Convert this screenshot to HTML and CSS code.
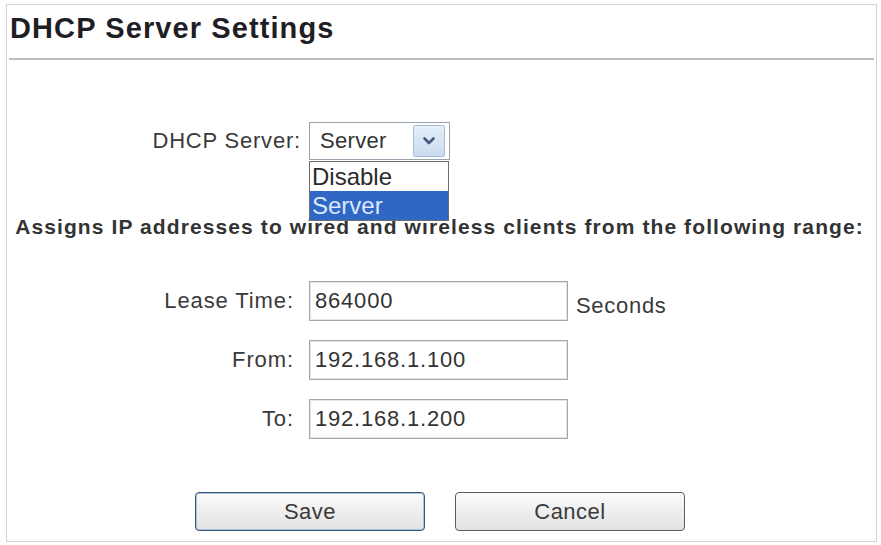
FILE: index.html
```html
<!DOCTYPE html>
<html>
<head>
<meta charset="utf-8">
<title>DHCP Server Settings</title>
<link rel="stylesheet" href="styles.css">
</head>
<body>
<div class="frame">
  <div class="header">
    <h1 class="title">DHCP Server Settings</h1>
  </div>
  <div class="content">
    <div class="dhcp-row">
      <span class="dhcp-label">DHCP Server:</span>
      <div class="select-wrap">
        <div class="select">
          <span class="select-value">Server</span>
          <span class="select-btn">
            <svg width="14" height="10" viewBox="0 0 14 10"><path d="M2.5 2.5 L7 7 L11.5 2.5" fill="none" stroke="#44587a" stroke-width="2.6" stroke-linecap="round" stroke-linejoin="round"/></svg>
          </span>
        </div>
        <ul class="select-list">
          <li class="opt">Disable</li>
          <li class="opt opt-selected">Server</li>
        </ul>
      </div>
    </div>
    <p class="assign">Assigns IP addresses to wired and wireless clients from the following range:</p>
    <div class="fields">
      <span class="field-label">Lease Time:</span>
      <input class="field-input" type="text" value="864000">
      <span class="unit">Seconds</span>
      <span class="field-label">From:</span>
      <input class="field-input" type="text" value="192.168.1.100">
      <span></span>
      <span class="field-label">To:</span>
      <input class="field-input" type="text" value="192.168.1.200">
      <span></span>
    </div>
    <div class="buttons">
      <button class="btn btn-default" type="button">Save</button>
      <button class="btn" type="button">Cancel</button>
    </div>
  </div>
</div>
</body>
</html>
```

FILE: styles.css
```css
* { box-sizing: border-box; }

html, body {
  margin: 0;
  padding: 0;
  background: #ffffff;
}

body {
  font-family: "Liberation Sans", Arial, sans-serif;
  color: #333333;
}

.frame {
  margin: 4px 4px 0 6px;
  height: 538px;
  border: 1px solid #d2d2d2;
  display: flex;
  flex-direction: column;
}

.header {
  margin: 0 2px;
  height: 55px;
  border-bottom: 2px solid #bdbdbd;
  padding: 8px 0 0 1px;
}

.title {
  margin: 0;
  font-size: 29px;
  line-height: 30px;
  font-weight: bold;
  letter-spacing: 1.1px;
  color: #1e1e24;
}

.content {
  display: flex;
  flex-direction: column;
}

.dhcp-row {
  display: flex;
  align-items: center;
  gap: 8px;
  margin-top: 62px;
}

.dhcp-label {
  width: 294px;
  text-align: right;
  font-size: 22px;
  letter-spacing: 0.8px;
  color: #3a3a3a;
}

.select-wrap {
  position: relative;
}

.select {
  width: 141px;
  height: 38px;
  border: 1px solid #9aa3ad;
  background: #fff;
  display: flex;
  align-items: center;
  justify-content: space-between;
  padding: 0 4px 0 10px;
}

.select-value {
  font-size: 22px;
  letter-spacing: 0.3px;
  color: #333;
}

.select-btn {
  width: 32px;
  height: 32px;
  border: 1px solid #a9bcd6;
  border-radius: 2px;
  background: linear-gradient(#e6effa, #c9daf0);
  display: flex;
  align-items: center;
  justify-content: center;
}

.select-list {
  position: absolute;
  top: 39px;
  left: 0;
  width: 140px;
  margin: 0;
  padding: 0;
  list-style: none;
  background: #fff;
  border: 1px solid #6f6f6f;
}

.opt {
  height: 29px;
  line-height: 29px;
  padding-left: 2px;
  font-size: 24px;
  color: #2a2a2a;
}

.opt-selected {
  background: #3167c4;
  color: #dbe8ff;
}

.assign {
  margin: 55px 0 0;
  text-align: center;
  font-size: 21px;
  line-height: 24px;
  font-weight: bold;
  letter-spacing: 1.1px;
  color: #333;
  padding-right: 4px;
}

.fields {
  display: grid;
  grid-template-columns: 287px 259px auto;
  grid-auto-rows: 40px;
  column-gap: 15px;
  row-gap: 19px;
  align-items: center;
  margin-top: 42px;
}

.fields .unit {
  margin-left: -7px;
  padding-top: 10px;
  font-size: 22px;
  letter-spacing: 0.7px;
  color: #3a3a3a;
}

.field-label {
  text-align: right;
  font-size: 22px;
  letter-spacing: 0.9px;
  color: #3a3a3a;
}

.field-input {
  width: 259px;
  height: 40px;
  margin: 0;
  border: 1px solid #a4a9ae;
  box-shadow: inset 0 0 0 1px #e2e4e6;
  padding: 0 5px;
  font-family: "Liberation Sans", Arial, sans-serif;
  font-size: 22px;
  letter-spacing: 0.8px;
  color: #333;
  background: #fff;
  outline: none;
}

.buttons {
  display: flex;
  gap: 30px;
  margin-top: 53px;
  padding-left: 188px;
}

.btn {
  width: 230px;
  height: 39px;
  border: 1px solid #5c5c5c;
  border-radius: 4px;
  background: linear-gradient(#fbfbfb, #ededed 55%, #e2e2e2);
  font-family: "Liberation Sans", Arial, sans-serif;
  font-size: 22px;
  letter-spacing: 0.5px;
  color: #3a3a3a;
  padding: 0;
}

.btn-default {
  border-color: #3b5675;
  box-shadow: inset 0 0 0 1px #a9c3e3;
}
```
